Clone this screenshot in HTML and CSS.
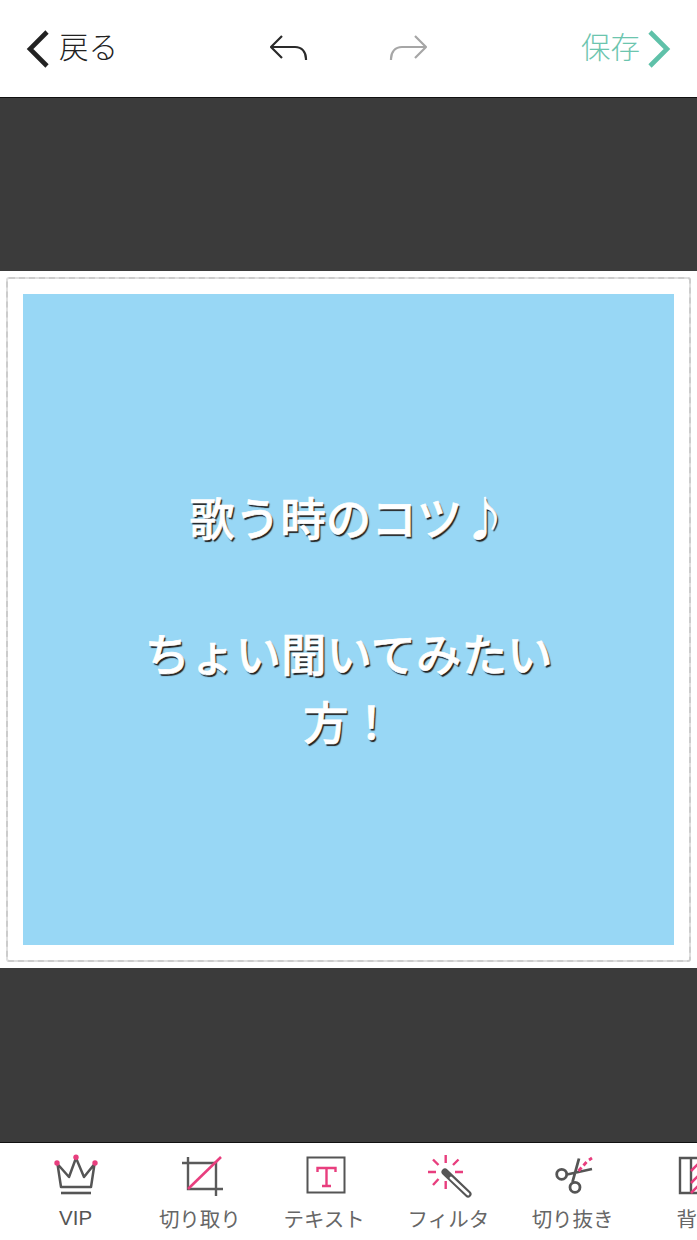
FILE: index.html
```html
<!DOCTYPE html>
<html lang="ja">
<head>
<meta charset="utf-8">
<title>編集</title>
<link rel="stylesheet" href="styles.css">
</head>
<body>
<div class="app">
  <header class="topbar">
    <div class="back">
      <svg class="chev" viewBox="0 0 24 38"><path d="M21 2 4 19l17 17" fill="none" stroke="#222" stroke-width="4.6"/></svg>
      <span class="nav-text">戻る</span>
    </div>
    <div class="history">
      <svg class="hist" viewBox="0 0 40 30"><path d="M13 3 2 14l11 11M2 14h24c7 0 11 5 11 12v1" fill="none" stroke="#2a2a2a" stroke-width="2.2" stroke-linejoin="round"/></svg>
      <svg class="hist" viewBox="0 0 40 30"><path d="M26 3l11 11-11 11M37 14H13C6 14 2 19 2 26v1" fill="none" stroke="#a6a6a6" stroke-width="2.2" stroke-linejoin="round"/></svg>
    </div>
    <div class="save">
      <span class="nav-text">保存</span>
      <svg class="chev" viewBox="0 0 24 38"><path d="M3 2l17 17L3 36" fill="none" stroke="#5fc1a9" stroke-width="4.6"/></svg>
    </div>
  </header>

  <div class="band band-top"></div>

  <main class="stage">
    <div class="frame">
      <div class="card">
        <p class="card-text">歌う時のコツ♪<br><br>ちょい聞いてみたい<br>方！</p>
      </div>
    </div>
  </main>

  <div class="band band-bottom"></div>

  <nav class="tools">
    <div class="tool">
      <svg class="icon" viewBox="0 0 50 44">
        <path d="M10 33 6.500 10 18 23 25 4 33 23 43.500 10 40 33z" fill="none" stroke="#555" stroke-width="2.500" stroke-linejoin="round"/>
        <path d="M10 39h30" stroke="#555" stroke-width="2.600"/>
        <circle cx="6" cy="9" r="2.700" fill="#e83e7e"/><circle cx="25" cy="3.200" r="2.700" fill="#e83e7e"/><circle cx="44" cy="9" r="2.700" fill="#e83e7e"/>
      </svg>
      <span class="label label-latin">VIP</span>
    </div>
    <div class="tool">
      <svg class="icon" viewBox="0 0 50 44">
        <path d="M7 9h34v33M13 3v32h35" fill="none" stroke="#5a5a5a" stroke-width="2.400"/>
        <path d="M13 35 46 3" stroke="#e83e7e" stroke-width="2.600"/>
      </svg>
      <span class="label">切り取り</span>
    </div>
    <div class="tool">
      <svg class="icon" viewBox="0 0 50 44">
        <rect x="8.500" y="3.500" width="37" height="35" fill="#fff" stroke="#555" stroke-width="2"/>
        <path d="M18.500 18v-4h18v4M27.500 14v18M23 32h9" fill="none" stroke="#e83e7e" stroke-width="2.400"/>
      </svg>
      <span class="label">テキスト</span>
    </div>
    <div class="tool">
      <svg class="icon" viewBox="0 0 50 44">
        <path d="M22.700 1v8M22.700 27v8M5 18h8M32 18h8M10 5.500l5.500 5.500M35.500 5.500 30 11M10 31l5.500-6" stroke="#e83e7e" stroke-width="2.400" fill="none"/>
        <path d="M22 18l23 22" stroke="#555" stroke-width="7" stroke-linecap="round"/>
        <path d="M28 24l17 16" stroke="#fff" stroke-width="2.800" stroke-linecap="round"/>
      </svg>
      <span class="label">フィルタ</span>
    </div>
    <div class="tool">
      <svg class="icon" viewBox="0 0 50 44">
        <circle cx="13.700" cy="20.300" r="5" fill="none" stroke="#555" stroke-width="2.800"/>
        <circle cx="27" cy="33.300" r="5" fill="none" stroke="#555" stroke-width="2.800"/>
        <path d="M24.500 28 31 4.500M19 20.500 44 15" stroke="#555" stroke-width="2.800" fill="none"/>
        <path d="M30.500 17l3-3.500M35.500 11.500l3-3.500M41 6l3-2" stroke="#e83e7e" stroke-width="2.800" fill="none"/>
      </svg>
      <span class="label">切り抜き</span>
    </div>
    <div class="tool">
      <svg class="icon" viewBox="0 0 50 44">
        <path d="M19 4v35" stroke="#555" stroke-width="2.400"/>
        <path d="M50 4H8v35h42" fill="none" stroke="#555" stroke-width="2.400"/>
        <path d="M19 17l8-8M19 29l8-8M19 39l8-8" stroke="#e83e7e" stroke-width="2.600"/>
      </svg>
      <span class="label">背景</span>
    </div>
  </nav>
</div>
</body>
</html>
```

FILE: styles.css
```css
* { box-sizing: border-box; }

html, body {
  margin: 0;
  padding: 0;
  background: #fff;
}

body {
  font-family: "Noto Sans CJK JP", "Liberation Sans", sans-serif;
}

.app {
  width: 697px;
  height: 1240px;
  overflow: hidden;
  display: flex;
  flex-direction: column;
}

.topbar {
  height: 98px;
  flex: none;
  border-bottom: 1px solid #111;
  padding: 0 26px;
  display: flex;
  align-items: center;
  justify-content: space-between;
  background: #fff;
}

.back, .save {
  width: 145px;
  display: flex;
  align-items: center;
  font-size: 29.500px;
  font-weight: 300;
  line-height: 1;
}

.nav-text {
  padding-bottom: 6px;
}

.back {
  gap: 9px;
  color: #222;
}

.save {
  gap: 7px;
  justify-content: flex-end;
  color: #6cc5ae;
}

.chev {
  width: 24px;
  height: 38px;
  flex: none;
}

.history {
  display: flex;
  align-items: center;
  gap: 80px;
  padding-bottom: 2px;
}

.hist {
  width: 40px;
  height: 30px;
  display: block;
}

.band {
  flex: none;
  background: #3b3b3b;
}

.band-top { height: 173px; }

.band-bottom { height: 174px; }

.stage {
  flex: none;
  height: 697px;
  padding: 6px;
  background: #fff;
}

.frame {
  width: 685px;
  height: 685px;
  border: 2px dashed #cccccc;
  border-radius: 3px;
  padding: 15px;
  background: linear-gradient(#fff, #fff) padding-box, #dfdfdf border-box;
}

.card {
  width: 651px;
  height: 651px;
  padding-bottom: 4px;
  background: #98d7f5;
  display: flex;
  align-items: center;
  justify-content: center;
}

.card-text {
  margin: 0;
  text-align: center;
  color: #fff;
  font-size: 45.500px;
  font-weight: 500;
  line-height: 68px;
  -webkit-text-stroke: 0.6px #fff;
  text-shadow: 1.500px 1.500px 1px #222;
}

.tools {
  flex: none;
  height: 98px;
  border-top: 1px solid #111;
  padding-left: 13.500px;
  display: flex;
  background: #fff;
  overflow: hidden;
}

.tool {
  width: 124.250px;
  flex: none;
  display: flex;
  flex-direction: column;
  align-items: center;
  padding-top: 11px;
}

.icon {
  width: 50px;
  height: 44px;
  display: block;
  flex: none;
}

.label {
  margin-top: 5px;
  font-size: 20.500px;
  line-height: 30px;
  color: #666;
  white-space: nowrap;
}

.label-latin {
  font-family: "Liberation Sans", sans-serif;
  color: #555;
}
```
